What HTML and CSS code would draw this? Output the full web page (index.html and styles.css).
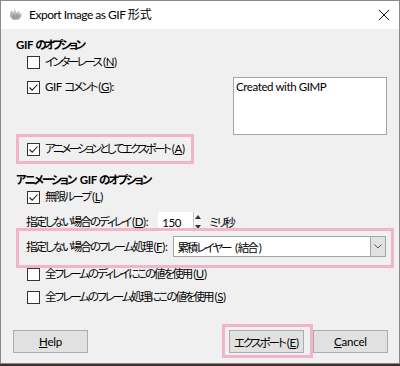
FILE: index.html
```html
<!DOCTYPE html>
<html lang="ja">
<head>
<meta charset="utf-8">
<title>Export Image as GIF</title>
<link rel="stylesheet" href="styles.css">
</head>
<body>
<div class="window">
  <div class="titlebar">
    <svg class="appicon" width="16" height="16" viewBox="0 0 16 16">
      <path d="M2 6 L4 3 L5 6 L7 2 L8 6 L11 4 L12 7 L14 6 L13 10 L10 13 L5 13 L2 10 Z" fill="#b9b9b9"/>
      <path d="M3 9 L13 9 M4 11 L12 11 M6 7 L6 12 M9 7 L9 12" stroke="#8c8c8c" stroke-width="0.8" fill="none"/>
    </svg>
    <span class="title">Export Image as GIF <span class="jt">形式</span></span>
    <svg class="close" width="12" height="12" viewBox="0 0 12 12">
      <path d="M1 1 L11 11 M11 1 L1 11" stroke="#1a1a1a" stroke-width="1" fill="none"/>
    </svg>
  </div>
  <div class="client">
    <div class="heading h1">GIF <span class="ja kana">のオプション</span></div>
    <div class="row check-row">
      <span class="cb"></span><span class="label"><span class="ja kana">インターレース</span>(<u>N</u>)</span>
    </div>
    <div class="comment-row">
      <div class="row check-row top">
        <span class="cb checked"><svg viewBox="0 0 13 13" width="13" height="13"><path d="M2.5 6.5 L5.2 9.2 L10.5 3.5" stroke="#222" stroke-width="1.1" fill="none"/></svg></span><span class="label">GIF <span class="ja">コメント</span>(<u>G</u>):</span>
      </div>
      <div class="textarea">Created with GIMP</div>
    </div>
    <div class="row check-row anim">
      <span class="cb checked"><svg viewBox="0 0 13 13" width="13" height="13"><path d="M2.5 6.5 L5.2 9.2 L10.5 3.5" stroke="#222" stroke-width="1.1" fill="none"/></svg></span><span class="label"><span class="ja kana">アニメーションとしてエクスポート</span>(<u>A</u>)</span>
    </div>
    <div class="heading h2"><span class="ja">アニメーション</span> GIF <span class="ja">のオプション</span></div>
    <div class="row check-row">
      <span class="cb checked"><svg viewBox="0 0 13 13" width="13" height="13"><path d="M2.5 6.5 L5.2 9.2 L10.5 3.5" stroke="#222" stroke-width="1.1" fill="none"/></svg></span><span class="label"><span class="ja">無限ループ</span>(<u>L</u>)</span>
    </div>
    <div class="row field-row delay">
      <span class="flabel"><span class="ja">指定しない場合のディレイ</span>(<u>D</u>):</span>
      <div class="spin">
        <span class="spin-val">150</span>
        <div class="spin-btns">
          <svg width="6" height="4" viewBox="0 0 6 4"><path d="M0 4 L3 0 L6 4 Z" fill="#333"/></svg>
          <svg width="6" height="4" viewBox="0 0 6 4"><path d="M0 0 L3 4 L6 0 Z" fill="#333"/></svg>
        </div>
      </div>
      <span class="unit ja">ミリ秒</span>
    </div>
    <div class="row field-row frame">
      <span class="flabel"><span class="ja">指定しない場合のフレーム処理</span>(<u>F</u>):</span>
      <div class="combo">
        <span class="combo-val"><span class="ja">累積レイヤー</span> (<span class="ja">結合</span>)</span>
        <span class="combo-btn"><svg width="8" height="5" viewBox="0 0 8 5"><path d="M0.5 0.5 L4 4 L7.5 0.5" stroke="#555" stroke-width="1" fill="none"/></svg></span>
      </div>
    </div>
    <div class="row check-row all1">
      <span class="cb"></span><span class="label"><span class="ja">全フレームのディレイにこの値を使用</span>(<u>U</u>)</span>
    </div>
    <div class="row check-row all2">
      <span class="cb"></span><span class="label"><span class="ja">全フレームのフレーム処理にこの値を使用</span>(<u>S</u>)</span>
    </div>
    <div class="buttons">
      <button class="btn"><u>H</u>elp</button>
      <div class="spacer"></div>
      <button class="btn"><span class="ja">エクスポート</span>(<u>E</u>)</button>
      <button class="btn cancel"><u>C</u>ancel</button>
    </div>
  </div>
  <div class="mark mark1"></div>
  <div class="mark mark2"></div>
  <div class="mark mark3"></div>
</div>
</body>
</html>
```

FILE: styles.css
```css
html, body {
  margin: 0;
  padding: 0;
}
body {
  width: 400px;
  height: 366px;
  background: #3a322e;
  overflow: hidden;
  font-family: "Lato", "Noto Sans CJK JP", sans-serif;
  font-size: 11.5px;
  letter-spacing: -0.4px;
  font-feature-settings: "palt";
  color: #000;
}
u {
  text-decoration: underline;
  text-underline-offset: 1px;
}
.ja {
  letter-spacing: -2px;
  margin-right: 2px;
}
.ja.kana {
  letter-spacing: -2.5px;
  margin-right: 2.5px;
}
.jt {
  letter-spacing: 0;
}
.window {
  position: relative;
  width: 398px;
  height: 362px;
  border: 1px solid #8a8a8a;
  background: #f0f0f0;
  display: flex;
  flex-direction: column;
}
.titlebar {
  height: 28px;
  background: #fff;
  display: flex;
  align-items: center;
  padding-left: 7px;
  padding-right: 9px;
  flex-shrink: 0;
}
.appicon {
  flex-shrink: 0;
}
.title {
  margin-left: 5px;
  font-size: 12px;
  line-height: 16px;
  letter-spacing: -0.5px;
  flex: 1;
}
.close {
  flex-shrink: 0;
}
.client {
  flex: 1;
  display: flex;
  flex-direction: column;
  padding: 8px 0 0 15px;
}
.heading {
  font-weight: bold;
  height: 16px;
  line-height: 16px;
  white-space: nowrap;
}
.h2 {
  margin-top: 14px;
}
.row {
  display: flex;
  align-items: center;
}
.check-row {
  height: 18px;
  padding-left: 11px;
}
.cb {
  width: 13px;
  height: 13px;
  box-sizing: border-box;
  border: 1px solid #333;
  background: #fff;
  flex-shrink: 0;
  position: relative;
}
.cb svg {
  position: absolute;
  left: -1px;
  top: -1px;
}
.label {
  margin-left: 5px;
  line-height: 16px;
  white-space: nowrap;
}
.comment-row {
  margin-top: 6px;
  display: flex;
  align-items: flex-start;
  justify-content: space-between;
  padding-right: 12px;
}
.comment-row .top {
  height: 20px;
}
.textarea {
  width: 154px;
  height: 58px;
  box-sizing: border-box;
  border: 1px solid #a5a5a5;
  background: #fff;
  padding: 2px 2px;
  line-height: 14px;
}
.anim {
  margin-top: 5px;
}
.field-row {
  padding-left: 10px;
  padding-right: 13px;
}
.flabel {
  white-space: nowrap;
  line-height: 16px;
}
.delay {
  margin-top: 6px;
  height: 20px;
}
.spin {
  margin-left: 10px;
  width: 43px;
  height: 20px;
  background: #fff;
  display: flex;
  align-items: center;
  justify-content: space-between;
}
.spin-val {
  padding-left: 4px;
}
.spin-btns {
  width: 8px;
  height: 20px;
  box-sizing: border-box;
  border-left: 1px solid #c8c8c8;
  background: #f4f4f4;
  display: flex;
  flex-direction: column;
  justify-content: space-around;
  align-items: center;
}
.spin-btns svg {
  display: block;
}
.unit {
  margin-left: 8px;
}
.frame {
  margin-top: 4px;
  height: 21px;
}
.combo {
  margin-left: 6px;
  flex: 1;
  height: 21px;
  box-sizing: border-box;
  border: 1px solid #a5a5a5;
  background: #fff;
  display: flex;
  align-items: center;
  justify-content: space-between;
}
.combo-val {
  padding-left: 3px;
  white-space: nowrap;
}
.combo-btn {
  width: 15px;
  height: 19px;
  box-sizing: border-box;
  background: #e1e1e1;
  border-left: 1px solid #a5a5a5;
  display: flex;
  align-items: center;
  justify-content: center;
  flex-shrink: 0;
}
.all1 {
  margin-top: 8px;
}
.all2 {
  margin-top: 5px;
}
.buttons {
  margin-top: 24px;
  margin-left: -3px;
  display: flex;
  padding-right: 11px;
}
.spacer {
  flex: 1;
}
.btn {
  width: 75px;
  height: 23px;
  box-sizing: border-box;
  border: 1px solid #adadad;
  background: #e1e1e1;
  font-family: inherit;
  font-size: 11.5px;
  letter-spacing: -0.2px;
  font-feature-settings: "palt";
  color: #000;
  padding: 0;
  margin: 0;
  white-space: nowrap;
}
.cancel {
  margin-left: 9px;
}
.mark {
  position: absolute;
  box-sizing: border-box;
  border: 3px solid #f2b3cb;
  pointer-events: none;
}
.mark1 {
  left: 15px;
  top: 133px;
  width: 178px;
  height: 30px;
}
.mark2 {
  left: 15px;
  top: 227px;
  width: 378px;
  height: 40px;
}
.mark3 {
  left: 221px;
  top: 323px;
  width: 91px;
  height: 34px;
}
```
